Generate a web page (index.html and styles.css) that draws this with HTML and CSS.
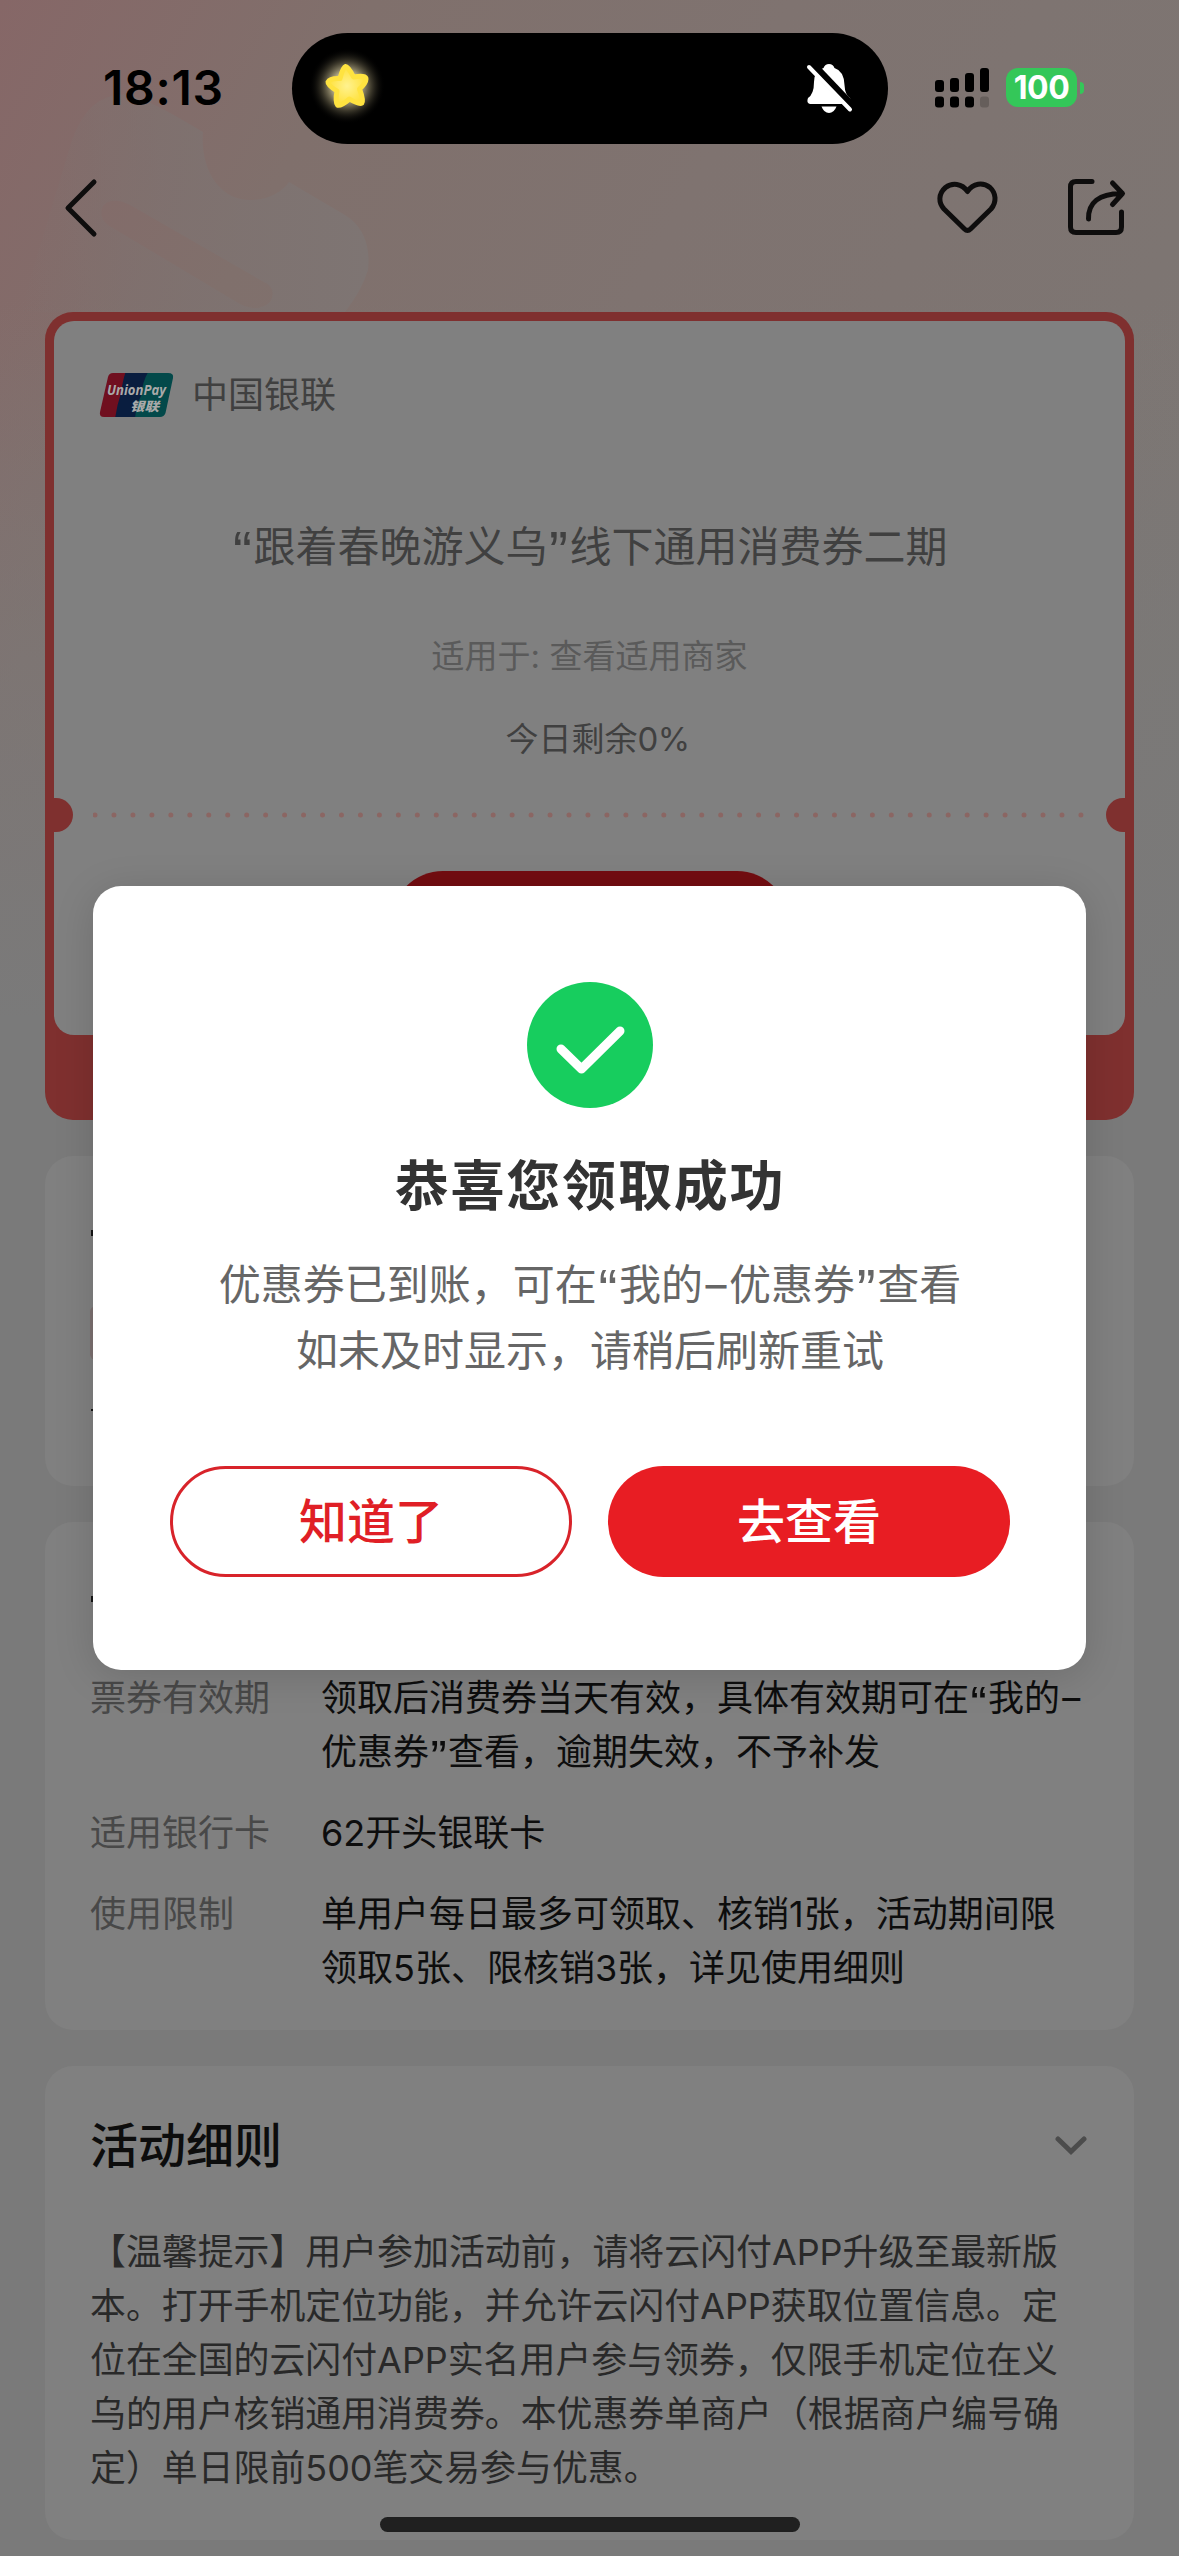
FILE: index.html
```html
<!DOCTYPE html>
<html lang="zh-CN">
<head>
<meta charset="utf-8">
<title>优惠券详情</title>
<link rel="stylesheet" href="styles.css">
</head>
<body>
<div class="screen">
  <svg class="watermark" width="420" height="312" viewBox="0 0 420 312">
    <defs><linearGradient id="mark" x1="0" y1="0" x2="1" y2="0"><stop offset="0" stop-color="#7e7270" stop-opacity="0"/><stop offset=".45" stop-color="#7e7270" stop-opacity=".75"/><stop offset="1" stop-color="#7e7573"/></linearGradient></defs>
    <path fill="url(#mark)" fill-rule="evenodd" d="M20 312 L72 140 Q90 90 130 95 Q150 100 203 132 C200 170 220 200 250 200 C268 200 282 192 289 182 L345 215 Q372 232 368 270 Q362 290 345 312 Z M108 225 L240 304 Q258 313 270 302 Q278 288 262 281 L130 205 Q112 196 103 206 Q98 217 108 225 Z"/>
  </svg>

  <header class="status">
    <span class="time">18:13</span>
    <div class="island">
      <svg class="star" width="90" height="90" viewBox="0 0 90 90">
        <defs>
          <radialGradient id="glow"><stop offset=".35" stop-color="#fff3c0" stop-opacity=".75"/><stop offset=".65" stop-color="#c9bc90" stop-opacity=".3"/><stop offset="1" stop-color="#000" stop-opacity="0"/></radialGradient>
          <radialGradient id="gold"><stop offset="0" stop-color="#fff28f"/><stop offset="1" stop-color="#ffe13c"/></radialGradient>
        </defs>
        <circle cx="44" cy="45" r="38" fill="url(#glow)"/>
        <path fill="url(#gold)" stroke="#ffe340" stroke-width="5" stroke-linejoin="round" d="M42.500 25.500 Q45 25 50.500 36 Q63 34 63 38 Q63 42 56.500 48 Q61 60 59 62 Q56 64 46.500 58 Q37 66 34.500 64 Q32 60 34 50 Q24.500 44 25 41 Q27 37 37 37.500 Q40 26 42.500 25.500Z"/>
      </svg>
      <svg class="bell" width="48" height="52" viewBox="0 0 48 52">
        <path fill="#fff" d="M23 2 Q27 2 28.500 6 Q38 9 38.500 23 Q39 33 44 36 Q46 41 43 42 H4 Q0 41 2 36 Q8 32 8 20 Q8 9 17.500 6 Q19 2 23 2Z"/>
        <path fill="#fff" d="M15.500 44.500 H30.500 Q28 51 23 51 Q18 51 15.500 44.500Z"/>
        <path stroke="#000" stroke-width="9.500" d="M4 1 L48 47"/>
        <path stroke="#fff" stroke-width="4" stroke-linecap="round" d="M3 5 L44 47.500"/>
      </svg>
    </div>
    <svg class="signal" width="56" height="40" viewBox="0 0 56 40">
      <rect x="0" y="12" width="9" height="12" rx="3"/><rect x="15" y="10" width="9" height="14" rx="3"/><rect x="30" y="5" width="9" height="19" rx="3"/><rect x="45" y="0" width="9" height="24" rx="3"/>
      <rect x="0" y="28.500" width="9" height="11" rx="3"/><rect x="15" y="28.500" width="9" height="11" rx="3"/><rect x="30" y="28.500" width="9" height="11" rx="3"/><rect x="45" y="28.500" width="9" height="11" rx="3" fill="#665e5b"/>
    </svg>
    <div class="battery">100</div>
    <i class="battery-tip"></i>
  </header>

  <nav class="nav">
    <svg width="36" height="60" viewBox="0 0 36 60"><path class="line" d="M31 4 L5 30 L31 56"/></svg>
    <svg class="heart" width="64" height="60" viewBox="0 0 64 60"><path class="line" d="M32.500 13.500 C27 5 17 4.500 10.500 9.500 C3 16 3.500 25 9 31 L29.500 51 Q32.500 54 35.500 51 L56 31 C62 24 61 15 55 9.500 C48 4 38 5 32.500 13.500Z"/></svg>
    <svg class="share" width="62" height="60" viewBox="0 0 62 60"><path class="line" d="M26 3.500 H10 Q4.500 3.500 4.500 9 V49 Q4.500 54.500 10 54.500 H50 Q55.500 54.500 55.500 49 V34 M22.500 41 Q22 16 55 15.500 M46.500 5 L56.500 15.500 L46.500 26.500"/></svg>
  </nav>

  <main class="cards">
    <section class="coupon">
      <div class="ticket">
        <div class="issuer">
          <svg width="76" height="48" viewBox="0 0 76 48">
            <defs><clipPath id="logo"><path d="M14 2 H69 Q75 2 74 7 L66.500 42 Q65 46 61 46 H5 Q0 46 1 41 L9 6 Q10 2 14 2Z"/></clipPath></defs>
            <g clip-path="url(#logo)"><path fill="#700f1f" d="M0 0 H40 V48 H0Z"/><path fill="#091d3f" d="M27 0 H60 V48 H16 Q18 34 22 22 Q24 8 27 0Z"/><path fill="#03494a" d="M50 0 H76 V48 H36 Q37 34 42 25 Q44 8 50 0Z"/></g>
            <text class="logo-en" x="8" y="24" textLength="59" lengthAdjust="spacingAndGlyphs">UnionPay</text>
            <text class="logo-cn" x="31" y="39.500" textLength="29" lengthAdjust="spacingAndGlyphs">银联</text>
          </svg>
          <span>中国银联</span>
        </div>
        <h1 class="coupon-title"><span class="q">“</span>跟着春晚游义乌<span class="q">”</span>线下通用消费券二期</h1>
        <p class="merchant">适用于: 查看适用商家</p>
        <p class="remain">今日剩余<span class="pct">0%</span></p>
        <div class="tear"><i class="notch"></i><svg class="dots" width="994" height="6" viewBox="0 0 994 6"><path d="M2 3 H991" stroke="#8b6663" stroke-width="5" stroke-linecap="round" stroke-dasharray="0 18.960"/></svg><i class="notch"></i></div>
        <div class="claim"></div>
      </div>
    </section>

    <section class="card steps"><i class="ink ink-a"></i><i class="tag-edge"></i><i class="ink ink-b"></i></section>

    <section class="card usage">
      <i class="ink ink-c"></i>
      <dl class="rows">
        <dt>票券有效期</dt><dd>领取后消费券当天有效，具体有效期可在<span class="q">“</span>我的<span class="dash">–</span><br>优惠券<span class="q">”</span>查看，逾期失效，不予补发</dd>
        <dt>适用银行卡</dt><dd>62开头银联卡</dd>
        <dt>使用限制</dt><dd>单用户每日最多可领取、核销1张，活动期间限<br>领取5张、限核销3张，详见使用细则</dd>
      </dl>
    </section>

    <section class="card rules">
      <div class="rules-head"><h2>活动细则</h2><svg width="32" height="20" viewBox="0 0 32 20"><path d="M3 3 L16 15.500 L29 3" fill="none" stroke="#4c4c4c" stroke-width="5" stroke-linecap="round"/></svg></div>
      <p>【温馨提示】用户参加活动前，请将云闪付APP升级至最新版<br>本。打开手机定位功能，并允许云闪付APP获取位置信息。定<br>位在全国的云闪付APP实名用户参与领券，仅限手机定位在义<br>乌的用户核销通用消费券。本优惠券单商户（根据商户编号确<br>定）单日限前500笔交易参与优惠。</p>
    </section>
  </main>

  <div class="modal">
    <svg width="126" height="126" viewBox="0 0 126 126"><circle cx="63" cy="63" r="63" fill="#17cd5e"/><path d="M34 67 L54.500 87 L93 49" fill="none" stroke="#fff" stroke-width="9" stroke-linecap="round" stroke-linejoin="round"/></svg>
    <h3>恭喜您领取成功</h3>
    <p>优惠券已到账，可在<span class="q">“</span>我的<span class="dash">–</span>优惠券<span class="q">”</span>查看<br>如未及时显示，请稍后刷新重试</p>
    <div class="actions"><button class="ghost">知道了</button><button class="solid">去查看</button></div>
  </div>
  <div class="home"></div>
</div>
</body>
</html>
```
FILE: styles.css
```css
* { box-sizing: border-box; margin: 0; padding: 0; }
body { width: 1179px; height: 2556px; overflow: hidden; }
.screen {
  position: relative;
  width: 1179px;
  height: 2556px;
  overflow: hidden;
  display: flex;
  flex-direction: column;
  font-family: Inter, "Noto Sans CJK SC", sans-serif;
  background:
    linear-gradient(180deg, rgba(122,122,122,0) 0, rgba(122,122,122,0) 300px, #7a7a7a 1020px),
    linear-gradient(118deg, #866767 0, #80706c 330px, #7f7370 700px, #7d7572 1150px, #7b7875 1500px);
}
.watermark { position: absolute; left: 0; top: 0; }

.status { height: 144px; flex: none; display: flex; padding: 33px 0 0 103px; position: relative; }
.time { width: 189px; font-size: 48px; line-height: 58px; font-weight: 600; padding-top: 26px; letter-spacing: .7px; }
.island { width: 596px; height: 111px; border-radius: 56px; background: #000; display: flex; justify-content: space-between; padding: 0 34px 0 11px; }
.star { margin-top: 8px; }
.bell { margin-top: 29px; }
.signal { margin: 35px 0 0 47px; }
.battery { width: 71px; height: 39px; margin: 35px 3px 0 15px; border-radius: 12px; background: #34c759; color: #fff; font-size: 32px; font-weight: 700; line-height: 39px; text-align: center; letter-spacing: -.5px; }
.battery-tip { width: 4px; height: 12px; margin-top: 49px; border-radius: 0 5px 5px 0; background: #34c759; }

.nav { height: 168px; flex: none; display: flex; padding: 34px 0 0 63px; position: relative; }
.nav svg { flex: none; }
.heart { margin-left: 836px; }
.share { margin-left: 67px; }
.line { fill: none; stroke: #0e0d0d; stroke-width: 5; stroke-linecap: round; stroke-linejoin: round; }

.cards { display: flex; flex-direction: column; gap: 36px; padding: 0 45px; position: relative; }
.coupon { height: 808px; border-radius: 28px; background: #7f302f; padding: 9px; }
.ticket { height: 714px; border-radius: 20px; background: #808080; display: flex; flex-direction: column; align-items: center; overflow: hidden; }
.issuer { align-self: stretch; display: flex; align-items: center; gap: 17px; height: 48px; margin: 50px 0 0 45px; font-size: 36px; color: #404040; }
.issuer span { line-height: 48px; margin-top: -1px; }
.logo-en { font: italic 700 14px "Open Sans", sans-serif; fill: #a9a9a9; }
.logo-cn { font: italic 900 12.5px "Noto Sans CJK SC", sans-serif; fill: #a9a9a9; }
.coupon-title { margin-top: 98px; height: 60px; line-height: 60px; font-size: 42px; font-weight: 400; color: #404040; white-space: nowrap; }
.merchant { margin-top: 54px; height: 50px; line-height: 50px; font-size: 33px; color: #5a5a5a; }
.remain { margin-top: 33px; height: 50px; line-height: 50px; font-size: 33px; color: #404040; padding-left: 16px; }
.pct { letter-spacing: -.5px; }
.tear { align-self: stretch; display: flex; align-items: center; justify-content: space-between; margin: 34px -15px 0; height: 34px; }
.notch { width: 34px; height: 34px; border-radius: 50%; background: #7f302f; }
.claim { width: 398px; height: 104px; margin-top: 39px; border-radius: 52px; background: #730d11; flex: none; }
.q { display: inline-block; width: .39em; text-align: center; font-family: "Liberation Sans", Arial, sans-serif; font-size: 1.35em; line-height: 0; vertical-align: -.18em; }
.dash { display: inline-block; width: .62em; text-align: center; line-height: 1; }

.card { border-radius: 28px; background: #808080; position: relative; }
.steps { height: 330px; }
.ink { position: absolute; left: 46px; width: 3px; height: 6px; background: #161616; }
.ink-a { top: 74px; }
.ink-b { top: 253px; height: 2px; }
.ink-c { top: 74px; }
.tag-edge { position: absolute; left: 45px; top: 150px; width: 20px; height: 54px; border-radius: 6px; background: #7c7070; }
.usage { height: 508px; padding: 149px 0 0 45px; }
.rows { display: grid; grid-template-columns: 231px 1fr; row-gap: 27px; font-size: 36px; line-height: 54px; white-space: nowrap; }
.rows dt { color: #484848; }
.rows dd { color: #0d0d0d; }
.rules { height: 474px; padding: 51px 47px 0 45px; }
.rules-head { display: flex; align-items: center; justify-content: space-between; height: 58px; }
.rules h2 { font-size: 48px; line-height: 58px; font-weight: 500; color: #0d0d0d; }
.rules p { margin-top: 50px; font-size: 35.9px; line-height: 54px; color: #292929; white-space: nowrap; }

.modal { position: absolute; left: 93px; top: 886px; width: 993px; height: 784px; border-radius: 28px; background: #fff; box-shadow: 0 6px 40px rgba(0,0,0,.14); display: flex; flex-direction: column; align-items: center; padding: 96px 0 0 1px; }
.modal h3 { margin-top: 44px; font-size: 54px; line-height: 70px; letter-spacing: 1.8px; font-weight: 600; color: #333; }
.modal p { margin-top: 30px; height: 132px; font-size: 42px; line-height: 66px; text-align: center; color: #666; white-space: nowrap; }
.actions { display: flex; gap: 36px; margin-top: 82px; }
.actions button { width: 402px; height: 111px; border-radius: 56px; font: 500 48px/1 Inter, "Noto Sans CJK SC", sans-serif; }
.ghost { border: 3px solid #d8232a; background: #fff; color: #e01f26; }
.solid { border: 0; background: #e81d23; color: #fff; }
.home { position: absolute; left: 380px; top: 2517px; width: 420px; height: 15px; border-radius: 8px; background: #202020; }
```
